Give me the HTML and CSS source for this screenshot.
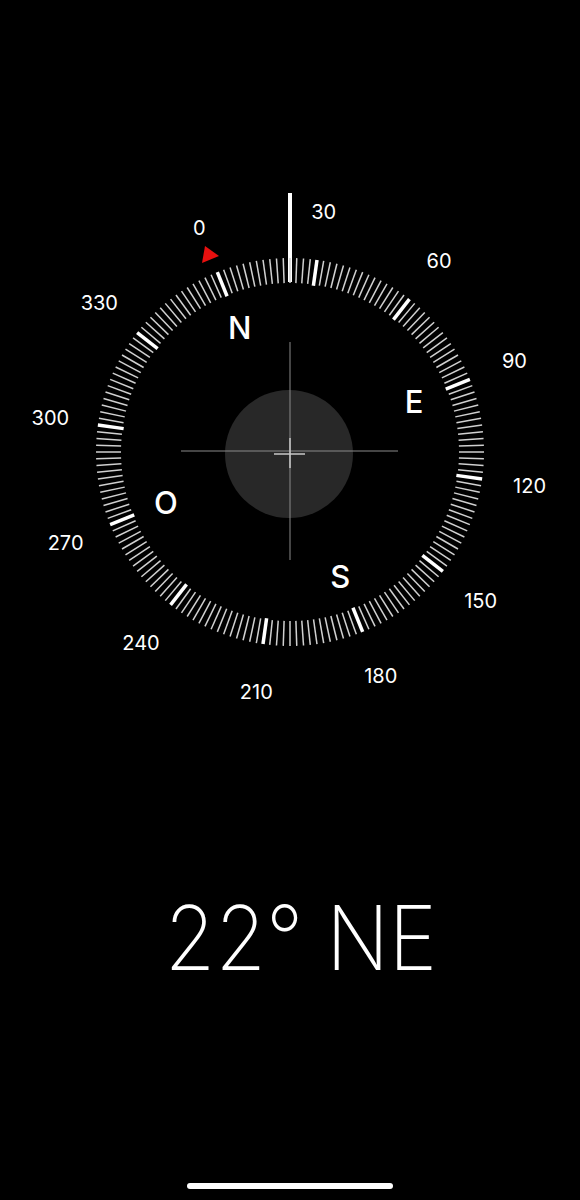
FILE: index.html
```html
<!DOCTYPE html>
<html lang="es">
<head>
<meta charset="UTF-8" />
<meta name="viewport" content="width=device-width, initial-scale=1.0"/>
<title>Brújula</title>
<link rel="stylesheet" href="styles.css">
</head>
<body>

<div class="screen">
  <svg class="compass" width="580" height="740" viewBox="0 0 580 740">
    <!-- aguja fija arriba -->
    <line class="heading-line" x1="290" y1="193" x2="290" y2="282" />

    <!-- dial que gira -->
    <g id="dial" transform="rotate(-22 290 452)">
      <g id="ticks"></g>
    </g>
    <g id="labels"></g>

    <polygon class="north-mark" points="205,246 202,263 219,256" />

    <!-- nivel -->
    <circle class="level" cx="289" cy="454" r="64" />
    <line class="cross" x1="290" y1="342" x2="290" y2="560" />
    <line class="cross" x1="181" y1="451" x2="398" y2="451" />
    <line class="cross-small" x1="274" y1="454" x2="305" y2="454" />
    <line class="cross-small" x1="290" y1="438" x2="290" y2="468" />
  </svg>

  <div class="reading">22° NE</div>

  <div class="home-bar"></div>
</div>

<script>
  const ns = 'http://www.w3.org/2000/svg';
  const cx = 290, cy = 452;
  const rotation = -22;
  const ticks = document.getElementById('ticks');
  const labels = document.getElementById('labels');

  // marcas cada 2 grados, gruesas cada 30
  for (let a = 0; a < 360; a += 2) {
    const t = document.createElementNS(ns, 'line');
    const major = a % 30 === 0;
    t.setAttribute('x1', cx);
    t.setAttribute('x2', cx);
    t.setAttribute('y1', cy - 194);
    t.setAttribute('y2', cy - (major ? 168 : 169));
    t.setAttribute('class', major ? 'tick major' : 'tick');
    t.setAttribute('transform', 'rotate(' + a + ' ' + cx + ' ' + cy + ')');
    ticks.appendChild(t);
  }

  function place(text, angle, r, cls) {
    const rad = (angle + rotation) * Math.PI / 180;
    const el = document.createElementNS(ns, 'text');
    el.setAttribute('x', (cx + r * Math.sin(rad)).toFixed(1));
    el.setAttribute('y', (cy - r * Math.cos(rad)).toFixed(1));
    el.setAttribute('class', cls);
    el.textContent = text;
    labels.appendChild(el);
  }

  for (let a = 0; a < 360; a += 30) {
    place(String(a), a, 242, 'degree');
  }

  // O = Oeste
  place('N', 0, 134, 'cardinal');
  place('E', 90, 134, 'cardinal');
  place('S', 180, 134, 'cardinal');
  place('O', 270, 134, 'cardinal');
</script>
</body>
</html>
```

FILE: styles.css
```css
body {
  margin: 0;
  padding: 0;
  background: #000;
  font-family: Inter, "Noto Sans", sans-serif;
}

.screen {
  width: 580px;
  height: 1200px;
  display: flex;
  flex-direction: column;
  align-items: center;
  background: #000;
  overflow: hidden;
}

.compass {
  display: block;
  flex-shrink: 0;
}

.heading-line {
  stroke: #fff;
  stroke-width: 4;
}

.tick {
  stroke: #d0d0d0;
  stroke-width: 1.5;
}

.tick.major {
  stroke: #fff;
  stroke-width: 3.5;
}

.degree {
  fill: #fff;
  font-size: 20px;
  text-anchor: middle;
  dominant-baseline: central;
}

.cardinal {
  fill: #fff;
  font-size: 31px;
  font-weight: 500;
  text-anchor: middle;
  dominant-baseline: central;
}

.north-mark {
  fill: #e8100f;
}

.level {
  fill: #282828;
}

.cross {
  stroke: #8a8a8a;
  stroke-width: 1;
}

.cross-small {
  stroke: #c8c8c8;
  stroke-width: 1.5;
}

/* lectura grande, Inter es más ancha que la original */
.reading {
  margin-top: 153px;
  margin-left: 22px;
  color: #fff;
  font-size: 89px;
  font-weight: 200;
  line-height: 1;
  white-space: nowrap;
  transform: scaleX(0.92);
}

.home-bar {
  margin-top: auto;
  margin-bottom: 11px;
  width: 206px;
  height: 6px;
  border-radius: 3px;
  background: #fff;
}
```
